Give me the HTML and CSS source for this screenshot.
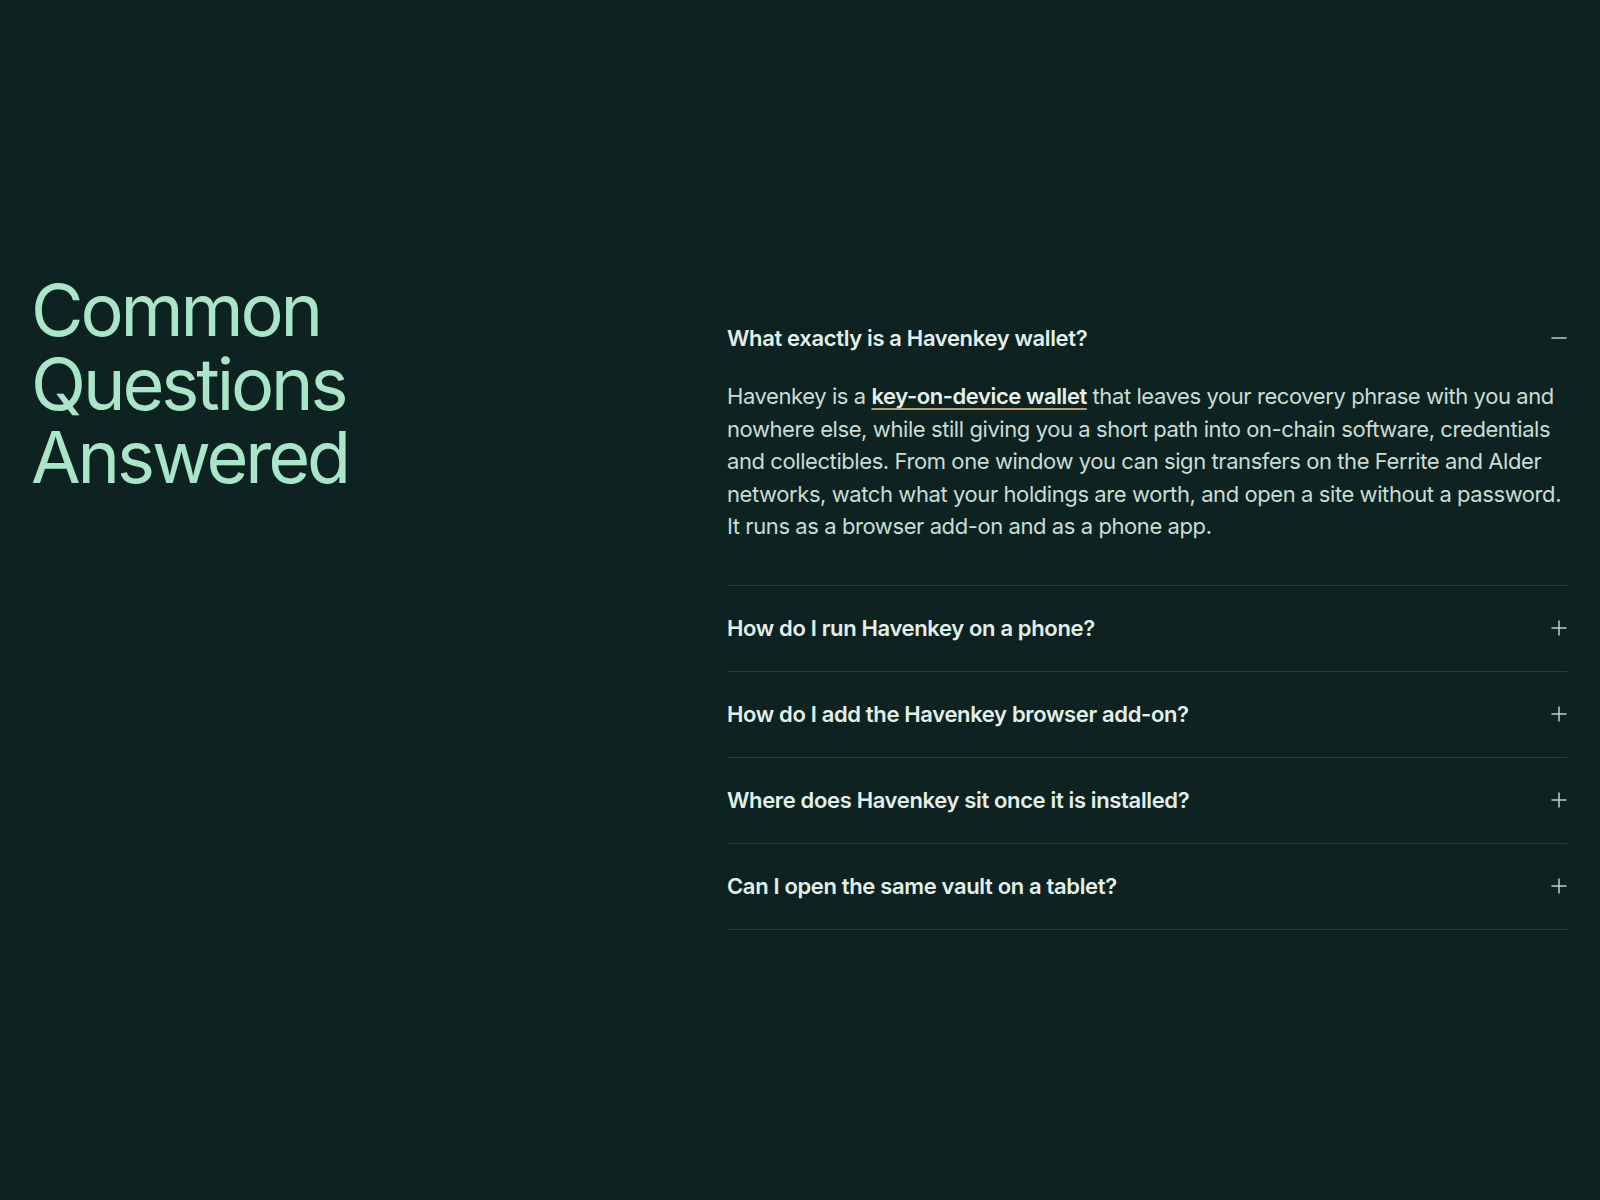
FILE: index.html
```html
<!DOCTYPE html>
<html lang="en">
<head>
<meta charset="utf-8">
<title>Common Questions Answered</title>
<link rel="stylesheet" href="styles.css">
</head>
<body>
<main class="page">
  <section class="faq">
    <h1 class="faq-title">Common<br>Questions<br>Answered</h1>
    <div class="faq-list">
      <div class="item open">
        <div class="question">
          <span class="q-text">What exactly is a Havenkey wallet?</span>
          <svg class="icon" viewBox="0 0 16 16" width="16" height="16"><path d="M0.5 8h15" /></svg>
        </div>
        <div class="answer">
          Havenkey is a <a class="link" href="#">key-on-device wallet</a> that leaves your recovery phrase with you and nowhere else, while still giving you a short path into on-chain software, credentials and collectibles. From one window you can sign transfers on the Ferrite and Alder networks, watch what your holdings are worth, and open a site without a password. It runs as a browser add-on and as a phone app.
        </div>
      </div>
      <div class="item">
        <div class="question">
          <span class="q-text">How do I run Havenkey on a phone?</span>
          <svg class="icon" viewBox="0 0 16 16" width="16" height="16"><path d="M0.5 8h15M8 0.5v15" /></svg>
        </div>
      </div>
      <div class="item">
        <div class="question">
          <span class="q-text">How do I add the Havenkey browser add-on?</span>
          <svg class="icon" viewBox="0 0 16 16" width="16" height="16"><path d="M0.5 8h15M8 0.5v15" /></svg>
        </div>
      </div>
      <div class="item">
        <div class="question">
          <span class="q-text">Where does Havenkey sit once it is installed?</span>
          <svg class="icon" viewBox="0 0 16 16" width="16" height="16"><path d="M0.5 8h15M8 0.5v15" /></svg>
        </div>
      </div>
      <div class="item">
        <div class="question">
          <span class="q-text">Can I open the same vault on a tablet?</span>
          <svg class="icon" viewBox="0 0 16 16" width="16" height="16"><path d="M0.5 8h15M8 0.5v15" /></svg>
        </div>
      </div>
    </div>
  </section>
</main>
</body>
</html>
```
FILE: styles.css
```css
* { box-sizing: border-box; }
html, body {
  margin: 0;
  padding: 0;
  background: #0e2321;
}
body {
  font-family: Inter, "Noto Sans", "Liberation Sans", sans-serif;
  color: #dcebe5;
}
.page {
  min-height: 100vh;
  display: flex;
  align-items: center;
  padding: 3px 33px 0;
}
.faq {
  width: 100%;
  display: grid;
  grid-template-columns: 1fr 840px;
  align-items: start;
}
.faq-title {
  margin: 0 0 0 -2px;
  font-size: 72px;
  line-height: 73.5px;
  font-weight: 400;
  letter-spacing: -3.1px;
  color: #a9e5c8;
}
.faq-list {
  margin-top: 22px;
}
.item {
  border-bottom: 1px solid #2a3f3c;
}
.question {
  display: flex;
  align-items: center;
  justify-content: space-between;
  height: 85px;
}
.q-text {
  font-size: 22px;
  line-height: 30px;
  font-weight: 600;
  letter-spacing: -0.35px;
  color: #e2f0ea;
}
.icon {
  width: 16px;
  height: 16px;
  flex: none;
  fill: none;
  stroke: #b9d2c9;
  stroke-width: 1.5;
}
.answer {
  font-size: 22px;
  line-height: 32.5px;
  font-weight: 400;
  letter-spacing: -0.42px;
  color: #c9dcd5;
  padding: 0 0 42px;
}
.link {
  color: #e6f1ec;
  font-weight: 600;
  text-decoration: underline;
  text-decoration-color: #b3a26c;
  text-decoration-thickness: 1.5px;
  text-underline-offset: 4px;
}
```
